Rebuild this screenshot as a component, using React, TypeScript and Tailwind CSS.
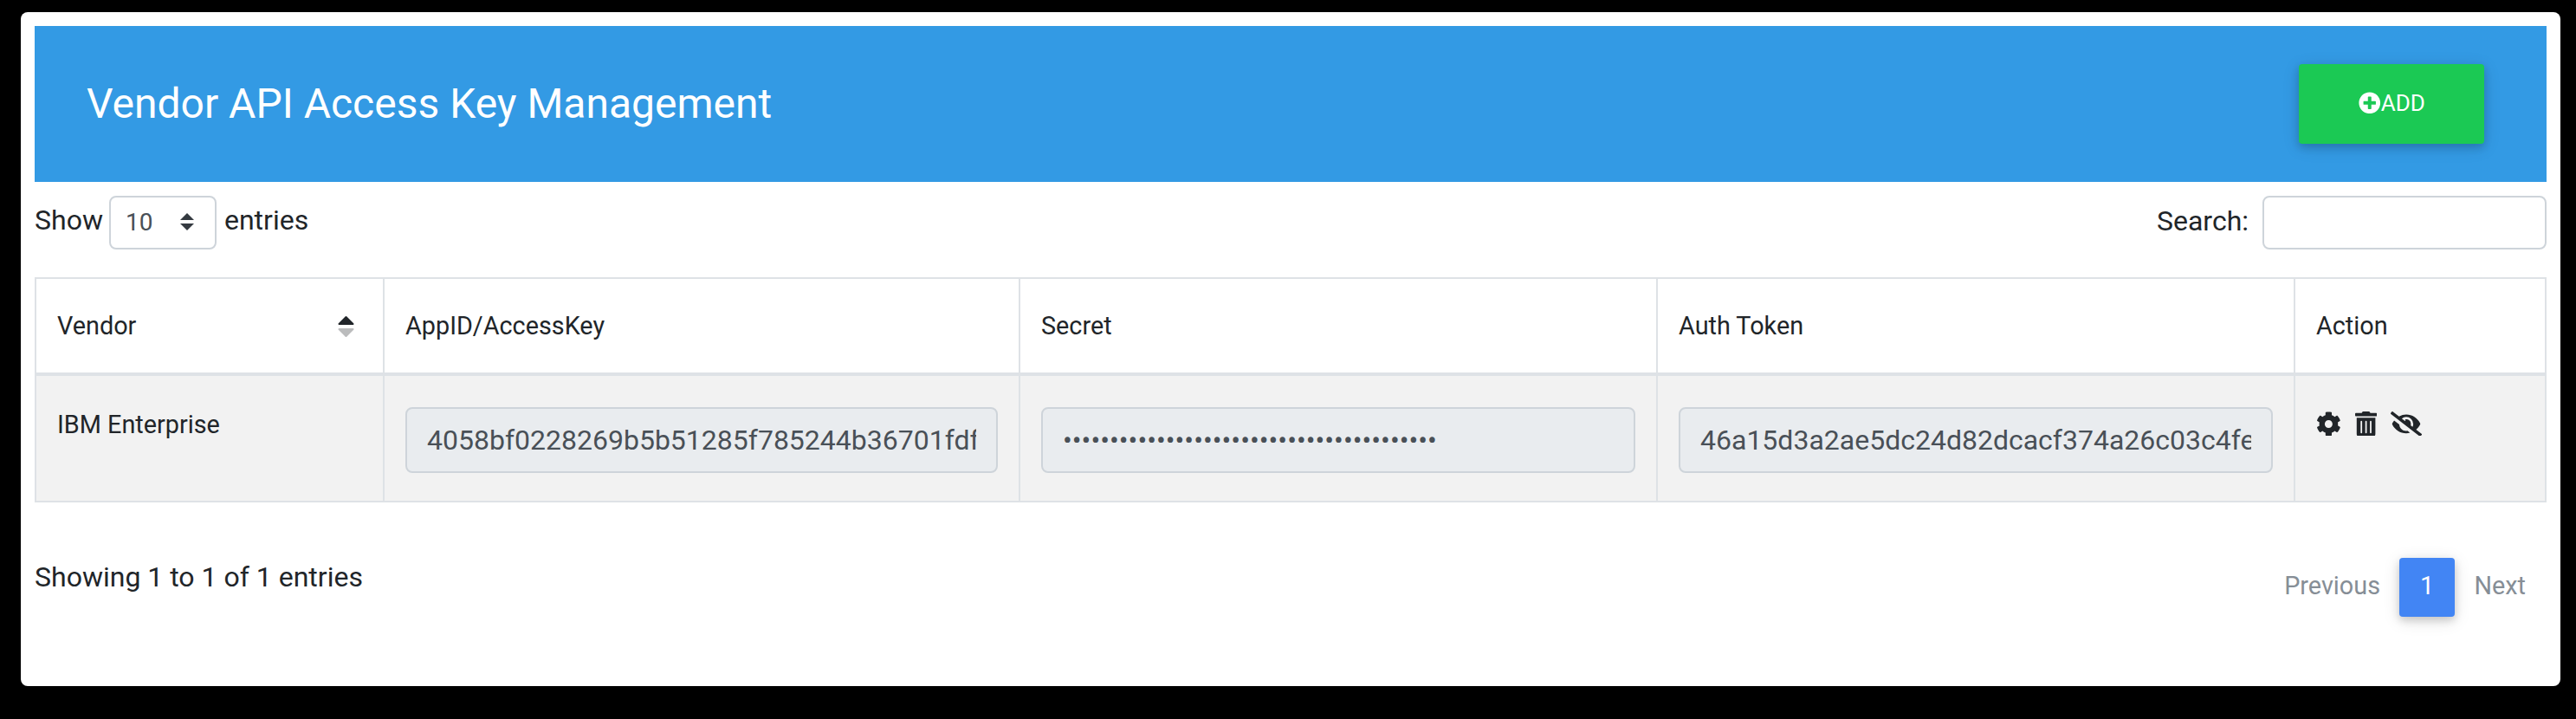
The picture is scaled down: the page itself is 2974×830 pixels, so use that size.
import type { ReactNode } from "react";
import { FaCog, FaEyeSlash, FaPlusCircle, FaTrashAlt } from "react-icons/fa";

const field =
  "block h-[76px] w-full rounded-lg border-2 border-[#ced4da] bg-[#e9ecef] px-[23px] text-[32px] text-[#495057] outline-none";

function Head({ children }: { children: ReactNode }) {
  return (
    <th className="border-2 border-b-4 border-[#dee2e6] px-6 text-left font-normal">
      {children}
    </th>
  );
}

function Cell({ children }: { children: ReactNode }) {
  return <td className="border-2 border-[#dee2e6] px-6 pt-[36px] align-top">{children}</td>;
}

export default function App() {
  return (
    <div className="h-[830px] w-[2974px] bg-black pt-[14px] pl-6 font-['Roboto',sans-serif] text-[32px] leading-[48px] text-[#212529]">
      <main className="h-[778px] w-[2932px] rounded-lg bg-white p-4">
        <header className="flex h-[180px] items-center justify-between bg-[#339ae4] pr-[72px] pl-[60px] text-white">
          <h1 className="text-[48px] leading-[58px]">Vendor API Access Key Management</h1>
          <button className="flex h-[92px] w-[214px] items-center justify-center rounded-[4px] bg-[#1bc954] pb-[3px] pl-px text-[26px] shadow-[0_4px_10px_rgba(0,0,0,0.16),0_4px_20px_rgba(0,0,0,0.12)]">
            <FaPlusCircle className="size-[25.5px]" />
            ADD
          </button>
        </header>

        <div className="flex h-[110px] items-start justify-between pt-4">
          <label className="flex items-center">
            <span className="mt-[-6px]">Show</span>
            <span className="mr-[9px] ml-[7px] flex h-[62px] w-[124px] items-center justify-between rounded-lg border-2 border-[#ced4da] pr-6 pl-[17px] text-[28px] text-[#495057]">
              10
              <svg className="mt-[-2px] h-5 w-4" viewBox="0 0 4 5" fill="#343a40">
                <path d="M2 0L0 2h4zm0 5L0 3h4z" />
              </svg>
            </span>
            <span className="mt-[-6px]">entries</span>
          </label>
          <label className="flex items-center">
            <span className="mt-[-4px]">Search:</span>
            <input className="ml-4 h-[62px] w-[328px] rounded-lg border-2 border-[#ced4da] px-4 text-[28px] outline-none" />
          </label>
        </div>

        <table className="w-full table-fixed border-collapse text-[28.8px] leading-[43px]">
          <colgroup>
            <col className="w-[402px]" />
            <col className="w-[734px]" />
            <col className="w-[736px]" />
            <col className="w-[736px]" />
            <col className="w-[290px]" />
          </colgroup>
          <thead>
            <tr className="h-[111px]">
              <Head>
                <span className="flex items-center justify-between pr-[9px]">
                  Vendor
                  <svg
                    className="mt-[2px] h-[26px] w-[19px]"
                    viewBox="0 0 19 26"
                    fill="#212529"
                    stroke="#212529"
                    strokeWidth="2"
                    strokeLinejoin="round"
                  >
                    <path d="M9.5 2L17.5 10H1.5z" />
                    <path d="M9.5 24L17.5 16H1.5z" opacity="0.3" />
                  </svg>
                </span>
              </Head>
              <Head>AppID/AccessKey</Head>
              <Head>Secret</Head>
              <Head>Auth Token</Head>
              <Head>Action</Head>
            </tr>
          </thead>
          <tbody>
            <tr className="h-[147px] bg-[#f2f2f2]">
              <Cell>
                <span className="mt-[-1px] block">IBM Enterprise</span>
              </Cell>
              <Cell>
                <input className={field} readOnly value="4058bf0228269b5b51285f785244b36701fdf9c2" />
              </Cell>
              <Cell>
                <input className={field} readOnly type="password" value="0123456789012345678901234567890123456789" />
              </Cell>
              <Cell>
                <input className={field} readOnly value="46a15d3a2ae5dc24d82dcacf374a26c03c4fe81b" />
              </Cell>
              <Cell>
                <span className="mt-[-2px] flex h-[42px] items-center gap-[16px]">
                  <FaCog />
                  <FaTrashAlt className="w-[25.2px]" />
                  <FaEyeSlash className="w-9" />
                </span>
              </Cell>
            </tr>
          </tbody>
        </table>

        <footer className="flex items-start justify-between pt-[64px]">
          <p className="mt-[-2px]">Showing 1 to 1 of 1 entries</p>
          <nav className="flex text-[28.8px] leading-[36px] text-[#868e96]">
            <a className="px-[22px] pt-[14px]">Previous</a>
            <a className="h-[68px] w-16 rounded-[4px] bg-[#4285f4] pt-[14px] text-center text-white shadow-[0_4px_10px_rgba(0,0,0,0.16),0_4px_20px_rgba(0,0,0,0.12)]">
              1
            </a>
            <a className="w-[106px] pt-[14px] pr-6 text-right">Next</a>
          </nav>
        </footer>
      </main>
    </div>
  );
}
